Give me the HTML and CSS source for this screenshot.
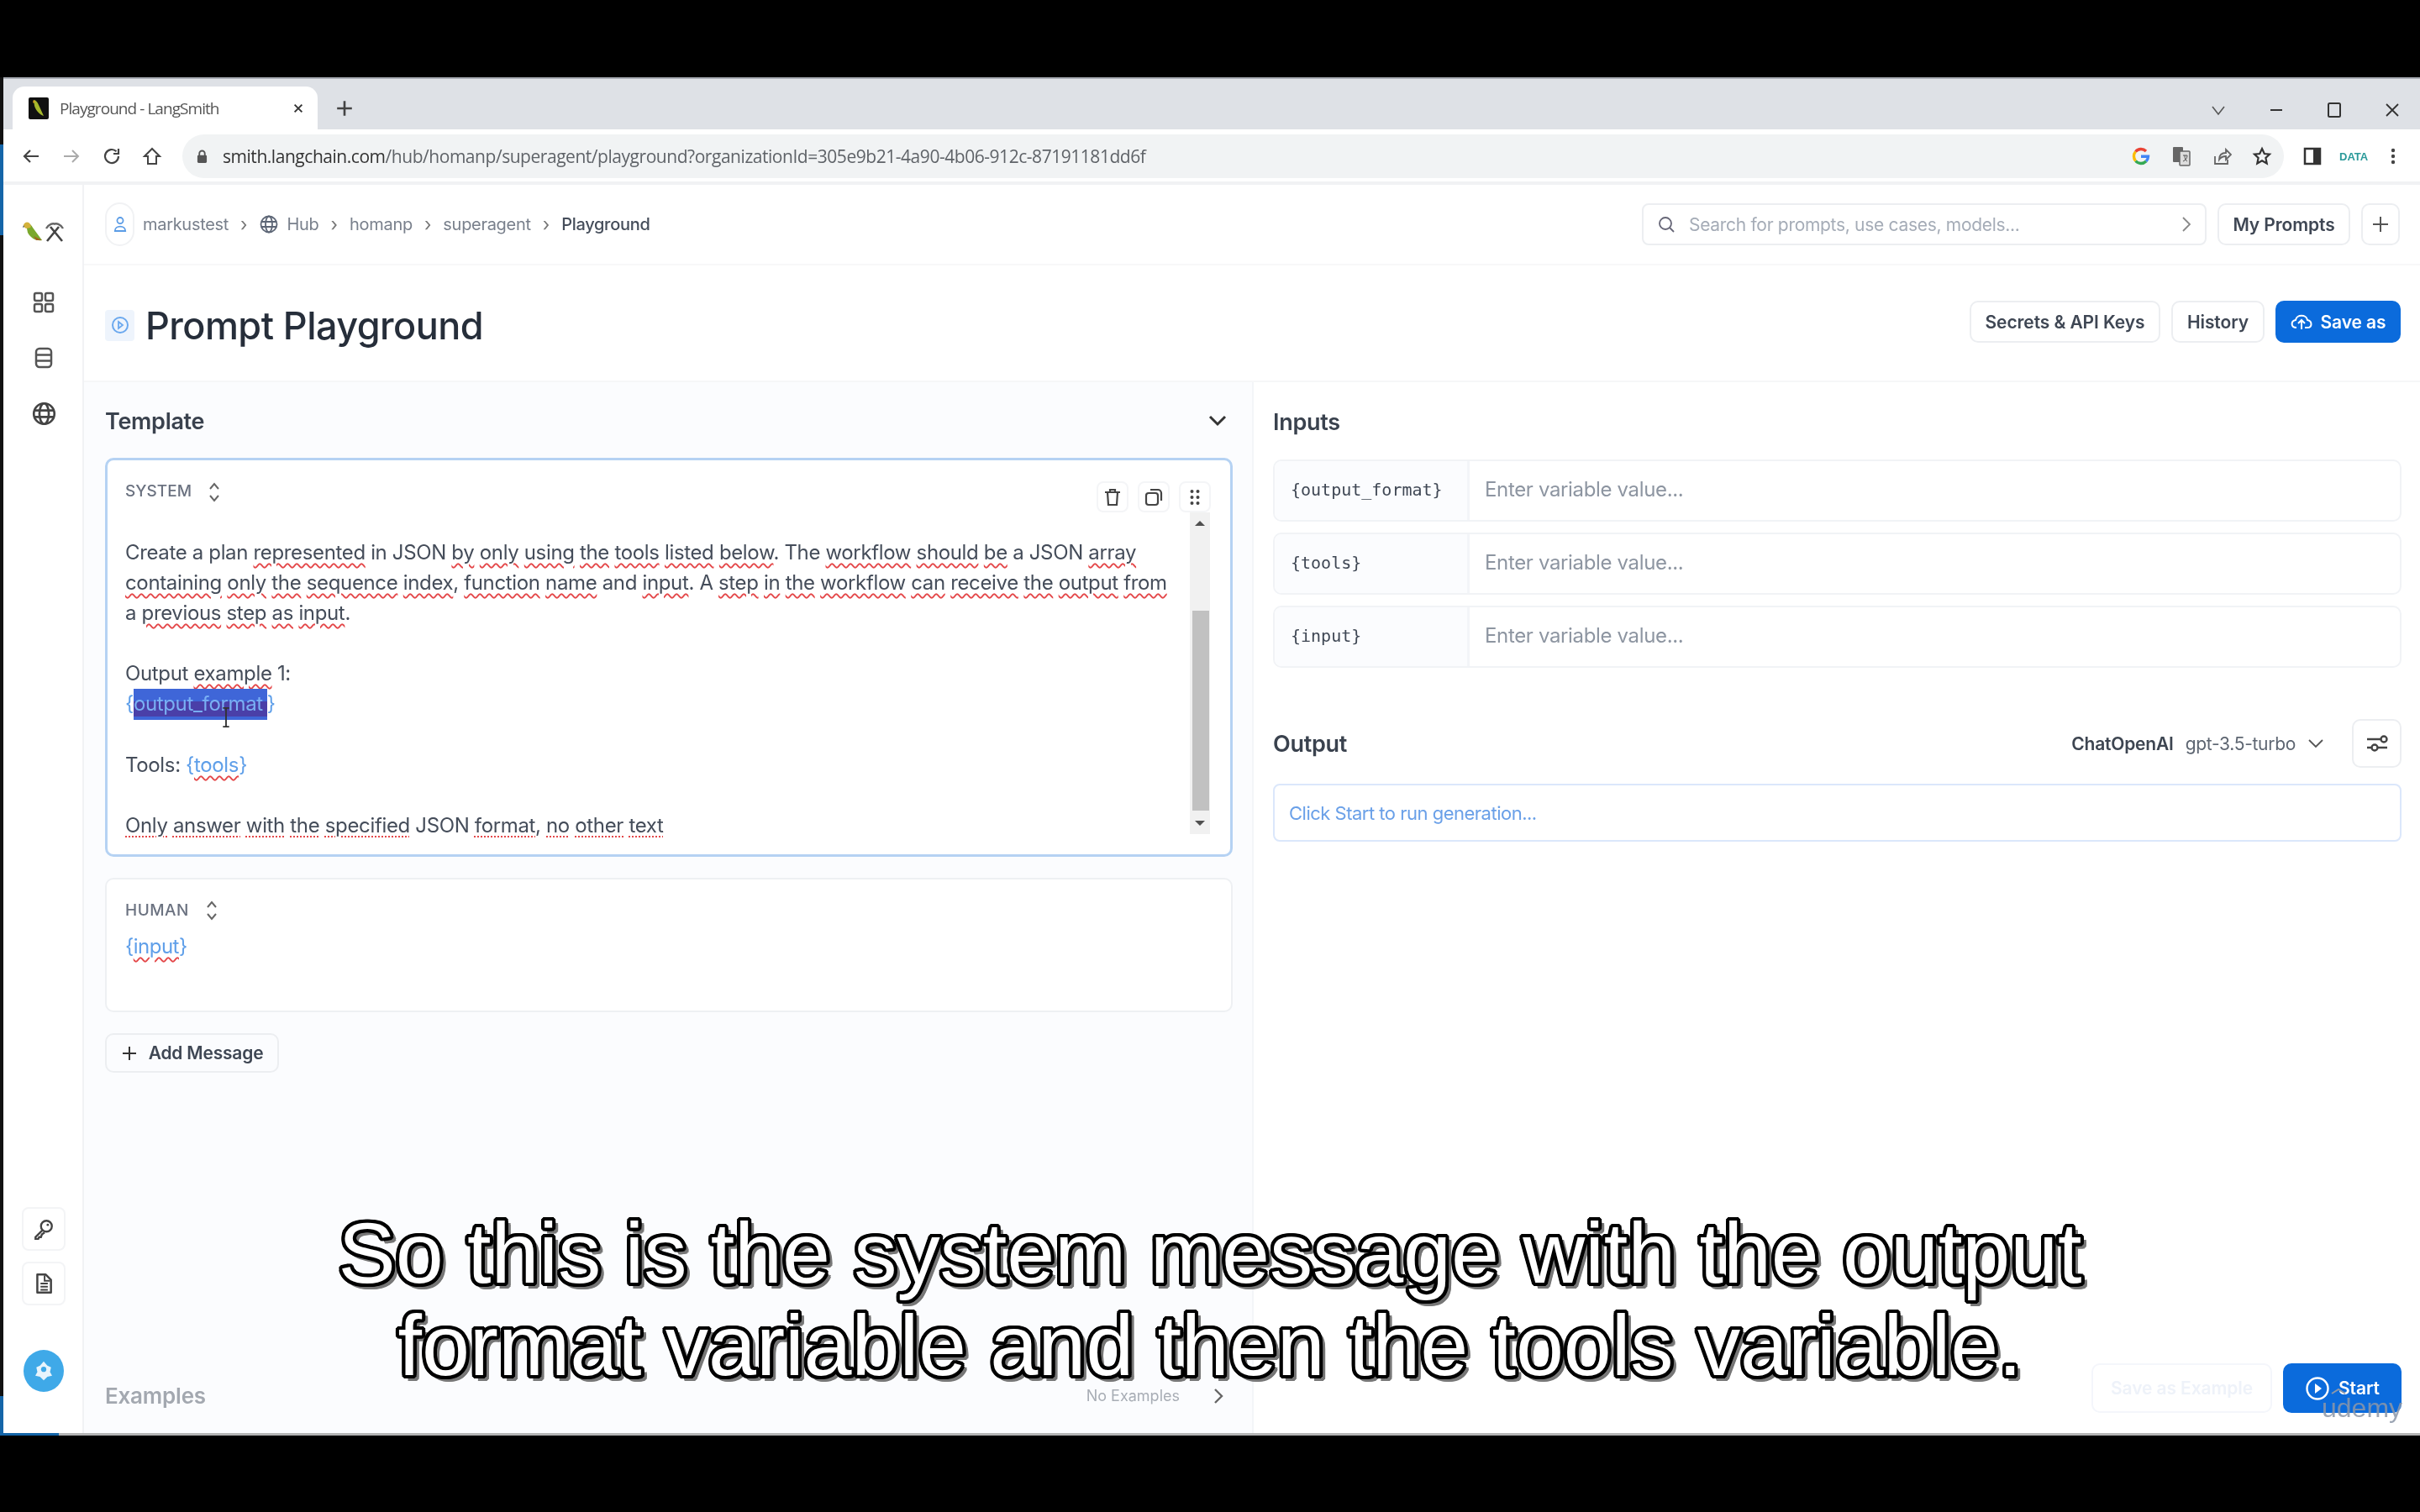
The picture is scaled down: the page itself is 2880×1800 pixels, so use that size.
FILE: index.html
```html
<!DOCTYPE html>
<html lang="en">
<head>
<meta charset="utf-8">
<title>Playground - LangSmith</title>
<link rel="stylesheet" href="styles.css">
</head>
<body>
<div class="screen">
  <div class="edge"></div>
  <div class="browser">
    <div class="tabstrip">
      <div class="tab">
        <svg class="favicon" viewBox="0 0 24 26"><rect width="24" height="26" rx="2" fill="#111"/><path d="M6 3c3 0 5 3 7 8l5 11c-5-2-9-6-11-12z" fill="#a6b82c"/><path d="M6 3c-1 2-1 3 0 4l2-2z" fill="#d9a520"/></svg>
        <span class="tab-title">Playground - LangSmith</span>
        <svg class="tab-x" viewBox="0 0 16 16"><path d="M3 3l10 10M13 3L3 13" stroke="#333" stroke-width="2.2"/></svg>
      </div>
      <svg class="tab-plus" viewBox="0 0 20 20"><path d="M10 2v16M2 10h16" stroke="#444" stroke-width="2.4"/></svg>
      <div class="win-controls">
        <svg viewBox="0 0 20 20"><path d="M3 6l7 9 7-9" fill="none" stroke="#555" stroke-width="1.6"/></svg>
        <svg viewBox="0 0 20 20"><path d="M3 10h14" stroke="#333" stroke-width="2"/></svg>
        <svg viewBox="0 0 20 20"><rect x="3" y="2" width="14" height="16" rx="1.5" fill="none" stroke="#333" stroke-width="2"/></svg>
        <svg viewBox="0 0 20 20"><path d="M3 3l14 14M17 3L3 17" stroke="#333" stroke-width="1.8"/></svg>
      </div>
    </div>
    <div class="toolbar">
      <div class="nav-icons">
        <svg viewBox="0 0 24 24"><path d="M21 12H4M11 5l-7 7 7 7" fill="none" stroke="#444" stroke-width="2.2"/></svg>
        <svg viewBox="0 0 24 24"><path d="M3 12h17M13 5l7 7-7 7" fill="none" stroke="#aaa" stroke-width="2"/></svg>
        <svg viewBox="0 0 24 24"><path d="M20 12a8 8 0 1 1-2.5-5.8M20 3v6h-6" fill="none" stroke="#444" stroke-width="2.2"/></svg>
        <svg viewBox="0 0 24 24"><path d="M3 12l9-9 9 9h-4v9H7v-9z" fill="none" stroke="#444" stroke-width="2"/></svg>
      </div>
      <div class="omnibox">
        <svg class="lock" viewBox="0 0 14 18"><path d="M3.500 8V5a3.500 3.500 0 0 1 7 0v3" fill="none" stroke="#555" stroke-width="2"/><rect x="1" y="7" width="12" height="10" rx="1.500" fill="#555"/></svg>
        <span class="url"><span class="url-host">smith.langchain.com</span>/hub/homanp/superagent/playground?organizationId=305e9b21-4a90-4b06-912c-87191181dd6f</span>
        <div class="omni-icons">
          <svg viewBox="0 0 24 24"><g fill="none" stroke-width="3.400"><path d="M12 12.200H20.500A8.500 8.500 0 0 1 18 18" stroke="#4285f4"/><path d="M18 18A8.500 8.500 0 0 1 5.500 17.500" stroke="#34a853"/><path d="M5.500 17.500A8.500 8.500 0 0 1 5.500 6.500" stroke="#fbbc05"/><path d="M5.500 6.500A8.500 8.500 0 0 1 18 6" stroke="#ea4335"/></g></svg>
          <svg viewBox="0 0 24 24"><rect x="2" y="1" width="12" height="18" rx="1" fill="#666"/><rect x="10" y="6" width="12" height="17" rx="1" fill="#ddd" stroke="#666" stroke-width="1.500"/><path d="M14 11h5M16 11c0 4 1 6 3 7M19 11c0 3-2 6-5 7" stroke="#555" fill="none"/></svg>
          <svg viewBox="0 0 24 24"><path d="M4 12v9h15v-5M9 16c0-6 4-8 8-8V4l6 6-6 6v-4c-4 0-6 1-8 4z" fill="none" stroke="#666" stroke-width="1.800"/></svg>
          <svg viewBox="0 0 24 24"><path d="M12 3l2.800 6 6.200.7-4.600 4.300 1.300 6.500L12 17.200 6.300 20.500l1.300-6.500L3 9.700 9.200 9z" fill="none" stroke="#333" stroke-width="2.200"/></svg>
        </div>
      </div>
      <div class="ext-icons">
        <svg viewBox="0 0 24 24"><rect x="3" y="3" width="18" height="18" fill="none" stroke="#333" stroke-width="2.500"/><rect x="13" y="3" width="8" height="18" fill="#333"/></svg>
        <span class="ext-data">DATA</span>
        <svg viewBox="0 0 24 24"><circle cx="12" cy="5" r="2.200" fill="#444"/><circle cx="12" cy="12" r="2.200" fill="#444"/><circle cx="12" cy="19" r="2.200" fill="#444"/></svg>
      </div>
    </div>
    <div class="app">
      <nav class="sidebar">
        <div class="logo">
          <svg class="parrot" viewBox="0 0 24 25"><path d="M4 4c3-2 6 0 8 4l11 15c-7 1-13-2-17-9z" fill="#7aa82c"/><path d="M1 5c1-4 6-5 8-1 1 2 1 3 0 4L5 9C3 9 1 7 1 5z" fill="#d3b23c"/><path d="M13 18l10 5-7 0z" fill="#a1651f"/><path d="M1 5l-1 3 2-1z" fill="#444"/></svg>
          <svg class="tools" viewBox="0 0 24 25"><path d="M3 24L17 7M21 24L7 7" fill="none" stroke="#444" stroke-width="2.600"/><path d="M2 9c3-5 8-7 11-5M22 9c-3-5-8-7-11-5" fill="none" stroke="#666" stroke-width="2.400"/></svg>
        </div>
        <svg class="side-icon first" viewBox="0 0 26 26"><g fill="none" stroke="#555" stroke-width="2.500"><rect x="2" y="2" width="9" height="9" rx="2"/><rect x="15" y="2" width="9" height="9" rx="2"/><rect x="2" y="15" width="9" height="9" rx="2"/><rect x="15" y="15" width="9" height="9" rx="2"/></g></svg>
        <svg class="side-icon" viewBox="0 0 26 26"><g fill="none" stroke="#555" stroke-width="2.500"><rect x="4" y="2" width="18" height="22" rx="4"/><path d="M4 9.500h18M4 16.500h18"/></g></svg>
        <svg class="side-icon globe" viewBox="0 0 26 26"><g fill="none" stroke="#444" stroke-width="2.400"><circle cx="13" cy="13" r="11"/><ellipse cx="13" cy="13" rx="5" ry="11"/><path d="M2.500 9.500h21M2.500 16.500h21"/></g></svg>
        <div class="side-bottom">
          <div class="side-box"><svg viewBox="0 0 24 24"><circle cx="15" cy="9" r="6" fill="none" stroke="#444" stroke-width="2.200"/><path d="M11 13l-8 8v2h3l1-2h2l1-3 3-2" fill="none" stroke="#444" stroke-width="2.200"/><circle cx="16.500" cy="7.500" r="1.300" fill="#444"/></svg></div>
          <div class="side-box"><svg viewBox="0 0 24 24"><path d="M5 2h9l6 6v14H5z" fill="none" stroke="#444" stroke-width="2.300" stroke-linejoin="round"/><path d="M8.500 12h8M8.500 15.500h8M8.500 19h8M13 3v6h6" fill="none" stroke="#444" stroke-width="1.800"/></svg></div>
          <div class="avatar"><svg viewBox="0 0 24 24"><path d="M12 3l3.500 4 3.500 1.500-1 4.500 2 3.500-4.500 1L12 21l-3.500-3.500-4.500-1 2-3.500-1-4.500L8.500 7z" fill="#e8f4fc"/><circle cx="12" cy="10.500" r="2.500" fill="#3fa9e8"/></svg></div>
        </div>
      </nav>
      <main class="main">
        <header class="topbar">
          <div class="crumbs">
            <span class="crumb-user"><svg viewBox="0 0 18 24"><circle cx="9" cy="7" r="4" fill="none" stroke="#5b9ce6" stroke-width="2"/><path d="M2 21c0-8 14-8 14 0z" fill="none" stroke="#5b9ce6" stroke-width="2"/></svg></span>
            <span class="crumb">markustest</span><span class="sep">›</span>
            <svg class="crumb-globe" viewBox="0 0 22 22"><g fill="none" stroke="#5d6676" stroke-width="1.800"><circle cx="11" cy="11" r="9.500"/><ellipse cx="11" cy="11" rx="4" ry="9.500"/><path d="M2 8h18M2 14h18"/></g></svg>
            <span class="crumb">Hub</span><span class="sep">›</span>
            <span class="crumb">homanp</span><span class="sep">›</span>
            <span class="crumb">superagent</span><span class="sep">›</span>
            <span class="crumb current">Playground</span>
          </div>
          <div class="top-actions">
            <div class="search">
              <svg viewBox="0 0 22 22"><circle cx="10" cy="10" r="7" fill="none" stroke="#667" stroke-width="1.800"/><path d="M15 15l5 5" stroke="#667" stroke-width="1.800"/></svg>
              <span class="search-text">Search for prompts, use cases, models...</span>
              <svg class="search-chev" viewBox="0 0 12 20"><path d="M2 2l8 8-8 8" fill="none" stroke="#888" stroke-width="1.800"/></svg>
            </div>
            <button class="btn my-prompts">My Prompts</button>
            <button class="btn plus-btn"><svg viewBox="0 0 20 20"><path d="M10 1v18M1 10h18" stroke="#555" stroke-width="2"/></svg></button>
          </div>
        </header>
        <section class="titlebar">
          <div class="title-group">
            <span class="title-icon"><svg viewBox="0 0 22 22"><circle cx="11" cy="11" r="9" fill="none" stroke="#6aa8ee" stroke-width="2"/><path d="M9 7l5 4-5 4z" fill="none" stroke="#6aa8ee" stroke-width="1.800"/></svg></span>
            <h1>Prompt Playground</h1>
          </div>
          <div class="title-actions">
            <button class="btn secrets">Secrets &amp; API Keys</button>
            <button class="btn history">History</button>
            <button class="btn primary save-as"><svg viewBox="0 0 26 24"><path d="M7 19c-7 0-7-8-1-9 1-7 13-7 14 0 6 1 6 9 0 9h-3" fill="none" stroke="#fff" stroke-width="2"/><path d="M13 21v-10M9 14l4-4 4 4" fill="none" stroke="#fff" stroke-width="2"/></svg>Save as</button>
          </div>
        </section>
        <div class="columns">
          <section class="col-left">
            <div class="panel-head">
              <h2>Template</h2>
              <svg class="collapse" viewBox="0 0 22 14"><path d="M2 2l9 9 9-9" fill="none" stroke="#333" stroke-width="3"/></svg>
            </div>
            <article class="card system">
              <div class="card-head">
                <span class="role">SYSTEM</span>
                <svg class="updown" viewBox="0 0 14 26"><path d="M2 9l5-6 5 6M2 17l5 6 5-6" fill="none" stroke="#666" stroke-width="2"/></svg>
                <div class="card-tools">
                  <span class="tool"><svg viewBox="0 0 24 24"><path d="M3 6h18M9 6V3h6v3M6 6l1 15h10l1-15" fill="none" stroke="#444" stroke-width="2.200"/></svg></span>
                  <span class="tool"><svg viewBox="0 0 24 24"><rect x="3" y="7" width="14" height="14" rx="3" fill="none" stroke="#444" stroke-width="2.200"/><path d="M8 3h9a4 4 0 0 1 4 4v9" fill="none" stroke="#444" stroke-width="2.200"/></svg></span>
                  <span class="tool"><svg viewBox="0 0 24 24"><g fill="#444"><circle cx="8.500" cy="5" r="2"/><circle cx="15.500" cy="5" r="2"/><circle cx="8.500" cy="12" r="2"/><circle cx="15.500" cy="12" r="2"/><circle cx="8.500" cy="19" r="2"/><circle cx="15.500" cy="19" r="2"/></g></svg></span>
                </div>
              </div>
              <div class="card-body">
                <div class="prompt">
                  <p>Create a plan <u>represented</u> in JSON <u>by</u> <u>only</u> <u>using</u> <u>the</u> <u>tools</u> <u>listed</u> <u>below</u>. The <u>workflow</u> <u>should</u> <u>be</u> a JSON <u>array</u> <u>containing</u> <u>only</u> <u>the</u> <u>sequence</u> <u>index</u>, <u>function</u> <u>name</u> and <u>input</u>. A <u>step</u> <u>in</u> <u>the</u> <u>workflow</u> <u>can</u> <u>receive</u> <u>the</u> <u>output</u> <u>from</u> a <u>previous</u> <u>step</u> <u>as</u> <u>input</u>.</p>
                  <p class="gap">Output <u>example</u> 1:</p>
                  <p><span class="var">{<span class="selected">output_format</span>}</span></p>
                  <p class="gap">Tools: <span class="var">{<u>tools</u>}</span></p>
                  <p class="gap"><u class="dots">Only</u> <u class="dots">answer</u> <u class="dots">with</u> <u class="dots">the</u> <u class="dots">specified</u> JSON <u class="dots">format</u>, <u class="dots">no</u> <u class="dots">other</u> <u class="dots">text</u></p>
                  <svg class="ibeam" viewBox="0 0 14 28"><path d="M3 2h8M7 2v24M3 26h8" fill="none" stroke="#333" stroke-width="2"/></svg>
                </div>
                <div class="scrollbar">
                  <span class="arrow-up"></span>
                  <span class="thumb"></span>
                  <span class="arrow-down"></span>
                </div>
              </div>
            </article>
            <article class="card human">
              <div class="human-head">
                <span class="role">HUMAN</span>
                <svg class="updown" viewBox="0 0 14 26"><path d="M2 9l5-6 5 6M2 17l5 6 5-6" fill="none" stroke="#666" stroke-width="2"/></svg>
              </div>
              <p class="prompt-line"><span class="var">{<u>input</u>}</span></p>
            </article>
            <button class="btn add-msg"><svg viewBox="0 0 20 20"><path d="M10 2v16M2 10h16" stroke="#333" stroke-width="2"/></svg>Add Message</button>
            <footer class="examples">
              <span class="examples-label">Examples</span>
              <span class="no-examples">No Examples</span>
              <svg viewBox="0 0 12 20"><path d="M2 2l8 8-8 8" fill="none" stroke="#666" stroke-width="2.400"/></svg>
            </footer>
          </section>
          <section class="col-right">
            <div class="panel-head inputs-head"><h2>Inputs</h2></div>
            <div class="input-rows">
              <div class="input-row"><code>{output_format}</code><span class="placeholder">Enter variable value...</span></div>
              <div class="input-row"><code>{tools}</code><span class="placeholder">Enter variable value...</span></div>
              <div class="input-row"><code>{input}</code><span class="placeholder">Enter variable value...</span></div>
            </div>
            <div class="output-head">
              <h2>Output</h2>
              <div class="model">
                <span class="model-name">ChatOpenAI</span>
                <span class="model-id">gpt-3.5-turbo</span>
                <svg viewBox="0 0 20 12"><path d="M2 2l8 8 8-8" fill="none" stroke="#555" stroke-width="1.800"/></svg>
              </div>
              <button class="btn settings"><svg viewBox="0 0 26 22"><g fill="none" stroke="#444" stroke-width="2.400"><path d="M1 6h16M1 16h6M13 16h12"/><circle cx="21" cy="6" r="3.500"/><circle cx="10" cy="16" r="3.500"/></g></svg></button>
            </div>
            <div class="output-box">Click Start to run generation...</div>
            <footer class="run-bar">
              <button class="btn ghost">Save as Example</button>
              <button class="btn primary start"><svg viewBox="0 0 30 30"><circle cx="15" cy="15" r="12.500" fill="none" stroke="#fff" stroke-width="2.400"/><path d="M12 9l8 6-8 6z" fill="#fff"/></svg>Start</button>
            </footer>
          </section>
        </div>
      </main>
    </div>
    <div class="taskline"></div>
  </div>
</div>
<div class="caption">So this is the system message with the output<br>format variable and then the tools variable.</div>
<div class="watermark"><svg viewBox="0 0 20 8"><path d="M2 7l8-5 8 5" fill="none" stroke="#8d97a8" stroke-width="2"/></svg><span>udemy</span></div>
</body>
</html>
```
FILE: styles.css
```css
* { box-sizing: border-box; }
html, body { margin: 0; padding: 0; background: #000; }
body { width: 2880px; height: 1800px; overflow: hidden; position: relative; font-family: Inter, "Liberation Sans", sans-serif; color: #2b3340; }
p, h1, h2 { margin: 0; }
svg { display: block; flex: none; }

.screen { margin-top: 92px; height: 1617px; display: flex; filter: blur(.7px); }
.edge { width: 4px; background: linear-gradient(#111 0, #111 80px, #1565a8 80px, #1565a8 188px, #111 188px, #111 1570px, #1565a8 1570px); }
.browser { flex: 1; display: flex; flex-direction: column; min-width: 0; }

.tabstrip { height: 62px; background: #dee1e6; border-top: 2px solid #a9adb5; display: flex; align-items: flex-end; padding-left: 11px; position: relative; }
.tab { width: 363px; height: 51px; background: #fff; border-radius: 14px 14px 0 0; display: flex; align-items: center; padding: 0 19px; }
.favicon { width: 24px; height: 26px; }
.tab-title { font: 19px "Open Sans", "Liberation Sans", sans-serif; color: #555; margin-left: 13px; flex: 1; letter-spacing: -.95px; }
.tab-x { width: 14px; height: 14px; margin-right: -3px; }
.tab-plus { width: 22px; height: 22px; margin: 0 0 14px 21px; }
.win-controls { margin-left: auto; align-self: flex-start; display: flex; gap: 49px; padding: 27px 23px 0 0; }
.win-controls svg { width: 20px; height: 20px; }

.toolbar { height: 66px; background: #fff; border-bottom: 4px solid #f1f2f4; display: flex; align-items: flex-start; padding: 6px 0 0 21px; }
.nav-icons { display: flex; gap: 24px; padding-top: 14px; }
.nav-icons svg { width: 24px; height: 24px; }
.omnibox { margin-left: 24px; width: 2501px; height: 52px; border-radius: 26px; background: #f1f3f4; display: flex; align-items: center; padding: 0 0 0 17px; }
.lock { width: 13px; height: 17px; }
.url { font: 21px "Open Sans", "Liberation Sans", sans-serif; color: #5f6368; margin-left: 18px; letter-spacing: -.46px; white-space: nowrap; }
.url-host { color: #333; }
.omni-icons { margin-left: auto; display: flex; gap: 24px; padding-right: 14px; }
.omni-icons svg { width: 24px; height: 24px; }
.ext-icons { display: flex; align-items: center; height: 52px; margin-left: 22px; gap: 16px; }
.ext-icons svg { width: 24px; height: 24px; }
.ext-data { font: 700 13px "Liberation Sans", sans-serif; color: #2b9a9a; width: 32px; margin: 0 4px; }

.app { flex: 1; display: flex; min-height: 0; background: #fff; }
.sidebar { width: 96px; border-right: 2px solid #f1f2f4; display: flex; flex-direction: column; align-items: center; padding-left: 2px; }
.logo { display: flex; align-items: center; height: 25px; margin-top: 43px; gap: 2px; }
.parrot { width: 24px; height: 25px; }
.tools { width: 24px; height: 25px; }
.side-icon { width: 26px; height: 26px; margin-top: 40px; }
.side-icon.first { margin-top: 59px; }
.side-icon.globe { width: 29px; height: 29px; margin-top: 39px; }
.side-bottom { margin-top: auto; display: flex; flex-direction: column; align-items: center; gap: 13px; padding-bottom: 49px; }
.side-box { width: 52px; height: 52px; border: 2px solid #f3f4f6; border-radius: 8px; display: flex; align-items: center; justify-content: center; }
.side-box svg { width: 26px; height: 26px; }
.avatar { width: 48px; height: 50px; border-radius: 50%; background: #3fa9e8; display: flex; align-items: center; justify-content: center; margin-top: 40px; }
.avatar svg { width: 30px; height: 30px; }

.main { flex: 1; display: flex; flex-direction: column; min-width: 0; }
.topbar { height: 96px; border-bottom: 2px solid #f8f8f9; display: flex; align-items: center; justify-content: space-between; padding: 0 24px 0 25px; }
.crumbs { display: flex; align-items: center; font-size: 20px; color: #79808c; }
.crumb-user { width: 35px; height: 52px; border: 2px solid #f1f2f4; border-radius: 18px; display: flex; align-items: center; justify-content: center; margin-right: 10px; }
.crumb-user svg { width: 16px; height: 24px; }
.crumb { letter-spacing: -.3px; }
.crumb.current { color: #454d5a; font-weight: 500; }
.sep { margin: 0 14px; font-size: 22px; color: #777; }
.crumb-globe { width: 22px; height: 22px; margin: 0 11px 0 0; }
.top-actions { display: flex; gap: 13px; align-items: center; }
.search { width: 672px; height: 50px; border: 2px solid #eceef1; border-radius: 8px; display: flex; align-items: center; padding: 0 16px; }
.search svg { width: 22px; height: 22px; }
.search .search-chev { width: 12px; height: 20px; margin-left: auto; }
.search-text { font-size: 21px; color: #a5acb7; margin-left: 16px; letter-spacing: -.3px; }
.btn { font: 600 21px Inter, "Liberation Sans", sans-serif; color: #3f4754; background: #fff; border: 2px solid #eceef1; border-radius: 10px; height: 50px; padding: 0 19px; display: flex; align-items: center; justify-content: center; white-space: nowrap; letter-spacing: -.1px; }
.my-prompts { width: 158px; padding: 0; }
.plus-btn { width: 46px; padding: 0; }
.plus-btn svg { width: 20px; height: 20px; }

.titlebar { height: 139px; border-bottom: 2px solid #f6f7f8; display: flex; justify-content: space-between; align-items: flex-start; padding: 42px 23px 0 25px; }
.title-group { display: flex; align-items: center; height: 58px; }
.title-icon { width: 35px; height: 37px; background: #eef4fc; border-radius: 4px; display: flex; align-items: center; justify-content: center; margin-right: 13px; }
.title-icon svg { width: 22px; height: 22px; }
h1 { font-size: 45px; font-weight: 500; letter-spacing: -.55px; color: #262e3a; }
.title-actions { display: flex; gap: 13px; }
.secrets { width: 227px; padding: 0; }
.history { width: 111px; padding: 0; }
.primary { background: #0b6bdc; border-color: #0b6bdc; color: #fff; }
.save-as { width: 149px; padding: 0; gap: 10px; }
.save-as svg { width: 26px; height: 24px; }

.columns { flex: 1; display: flex; min-height: 0; }
.col-left { width: 1392px; background: #fbfcfe; border-right: 2px solid #f3f5f8; display: flex; flex-direction: column; padding: 0 23px 0 25px; }
.col-right { flex: 1; display: flex; flex-direction: column; padding: 0 22px 0 23px; min-width: 0; }
.panel-head { height: 90px; padding-top: 2px; display: flex; align-items: center; justify-content: space-between; }
.inputs-head { height: 92px; }
h2 { font-size: 27px; font-weight: 600; letter-spacing: -.3px; color: #3a424e; }
.collapse { width: 22px; height: 14px; margin-right: 7px; }

.card { background: #fff; border: 2px solid #eef0f3; border-radius: 10px; }
.system { height: 475px; border: 3px solid #b5d2f3; padding: 25px 23px 24px 21px; display: flex; flex-direction: column; }
.card-head { height: 37px; display: flex; align-items: flex-start; }
.role { font-size: 19px; font-weight: 500; color: #6b7280; margin-top: 0; line-height: 24px; }
.updown { width: 14px; height: 26px; margin-left: 20px; }
.card-tools { margin-left: auto; display: flex; gap: 11px; }
.tool { width: 38px; height: 37px; border: 2px solid #f4f5f7; border-radius: 8px; display: flex; align-items: center; justify-content: center; }
.tool svg { width: 24px; height: 24px; }
.card-body { flex: 1; display: flex; min-height: 0; }
.prompt { flex: 1; position: relative; padding: 30px 16px 0 0; font-size: 24px; line-height: 36px; color: #454d5a; letter-spacing: -.35px; }
.gap { margin-top: 36px; }
u { text-decoration: underline wavy #e4484a 1.5px; text-underline-offset: 4px; }
u.dots { text-decoration-style: dotted; text-decoration-thickness: 2px; }
.var { color: #5f9fe9; }
.selected { display: inline-block; height: 37px; line-height: 36px; vertical-align: top; padding-right: 5px; background: linear-gradient(#3f66d8 0 40%, #4a3fa8 40% 90%, #3f66d8 90%); color: #79b0f4; }
.ibeam { position: absolute; left: 113px; top: 231px; width: 14px; height: 26px; }
.scrollbar { width: 24px; background: #f1f1f1; display: flex; flex-direction: column; align-items: center; justify-content: space-between; padding: 10px 0; margin-right: 1px; position: relative; }
.thumb { position: absolute; left: 3px; right: 1px; top: 117px; height: 238px; background: #c1c1c1; }
.arrow-up { width: 0; height: 0; border: 6px solid transparent; border-top: 0; border-bottom: 6px solid #505050; }
.arrow-down { width: 0; height: 0; border: 6px solid transparent; border-bottom: 0; border-top: 6px solid #505050; }
.human { height: 160px; margin-top: 25px; padding: 24px 23px 0 22px; }
.human-head { display: flex; align-items: center; height: 26px; }
.human .role { letter-spacing: .5px; }
.prompt-line { font-size: 24px; letter-spacing: -.5px; line-height: 36px; margin-top: 12px; }
.add-msg { width: 207px; height: 47px; margin-top: 25px; padding: 0; gap: 13px; background: #fbfcfe; letter-spacing: -.2px; }
.add-msg svg { width: 20px; height: 20px; }

.examples { margin-top: auto; height: 89px; display: flex; align-items: center; }
.examples-label { font-size: 26px; font-weight: 600; color: #a3a8b0; margin-right: auto; letter-spacing: -.2px; }
.no-examples { font-size: 18px; color: #a8adb5; margin-right: 40px; }
.examples svg { width: 12px; height: 20px; margin-right: 11px; }

.input-rows { display: flex; flex-direction: column; gap: 13px; }
.input-row { height: 74px; border: 2px solid #f1f3f6; border-radius: 10px; display: flex; align-items: center; overflow: hidden; }
code { width: 232px; height: 100%; background: #fbfcfe; border-right: 3px solid #f3f5f8; display: flex; align-items: center; padding: 0 0 3px 19px; font: 20px "DejaVu Sans Mono", "Liberation Mono", monospace; color: #3f4754; }
.placeholder { font-size: 24px; color: #8d95a1; margin: 0 0 3px 18px; letter-spacing: -.35px; }
.output-head { display: flex; align-items: center; margin-top: 61px; height: 58px; }
.model { margin-left: auto; display: flex; align-items: center; font-size: 21px; }
.model-name { font-weight: 600; color: #3d4551; letter-spacing: -.2px; }
.model-id { color: #5e6672; margin-left: 14px; letter-spacing: -.3px; }
.model svg { width: 20px; height: 12px; margin-left: 14px; }
.settings { width: 59px; height: 58px; padding: 0; margin-left: 33px; }
.settings svg { width: 26px; height: 22px; }
.output-box { height: 69px; margin-top: 19px; border: 2px solid #dbe7fb; border-radius: 8px; display: flex; align-items: center; padding-left: 17px; font-size: 22px; color: #6aa0e8; letter-spacing: -.5px; }
.run-bar { margin-top: auto; height: 89px; display: flex; justify-content: flex-end; gap: 13px; padding-top: 6px; }
.run-bar .btn { height: 59px; }
.ghost { width: 215px; padding: 0; border-color: #f4f6fb; color: #eef2f9; }
.start { width: 141px; padding: 0; gap: 10px; }
.start svg { width: 30px; height: 30px; }
.taskline { height: 3px; background: linear-gradient(to right, #1565a8 66px, #b4b4b4 66px); }

.caption { position: absolute; left: 0; top: 1437px; width: 2880px; text-align: center; font: 102.500px/110px "Liberation Sans", Arial, sans-serif; letter-spacing: -.1px; color: #fff; text-shadow: 4px 0 0 #000, -4px 0 0 #000, 0 4px 0 #000, 0 -4px 0 #000, 3px 3px 0 #000, -3px 3px 0 #000, 3px -3px 0 #000, -3px -3px 0 #000, 4px 2px 0 #000, -4px 2px 0 #000, 4px -2px 0 #000, -4px -2px 0 #000, 2px 4px 0 #000, -2px 4px 0 #000, 2px -4px 0 #000, -2px -4px 0 #000, 7px 3px 0 #777, 3px 7px 0 #777, 6px 6px 0 #777, 7px 5px 0 #777, 5px 7px 0 #777; }
.watermark { position: absolute; left: 2764px; top: 1652px; width: 94px; display: flex; flex-direction: column; align-items: center; }
.watermark svg { width: 20px; height: 8px; margin: 0 0 0 -56px; }
.watermark span { font: 32px/32px "Liberation Sans", sans-serif; color: #8d97a8; opacity: .85; }
```
